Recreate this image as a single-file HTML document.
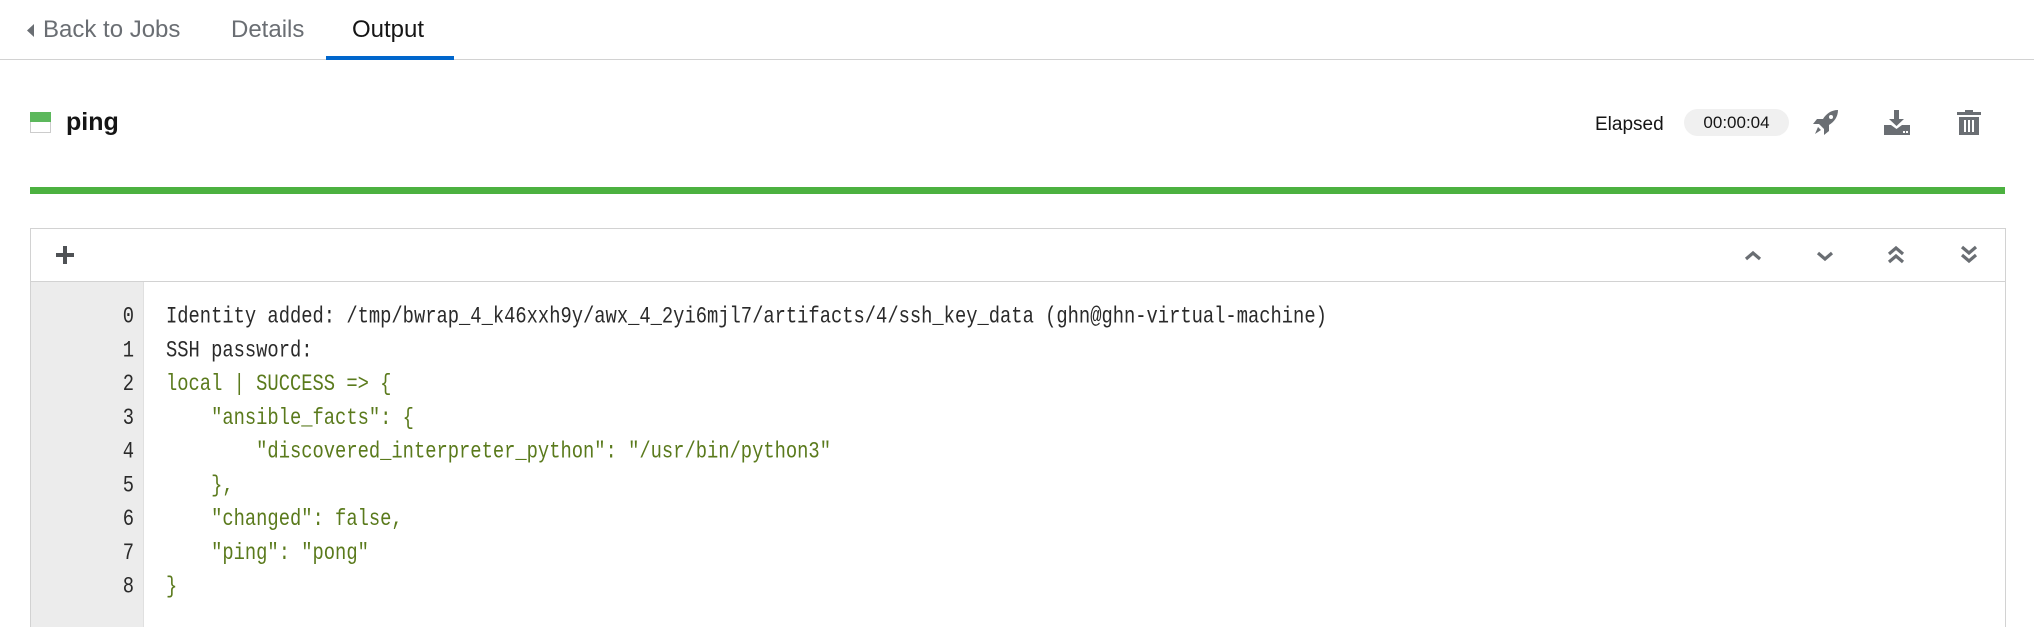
<!DOCTYPE html>
<html><head><meta charset="utf-8"><style>
*{margin:0;padding:0;box-sizing:border-box}
body{width:2034px;height:627px;background:#fff;position:relative;overflow:hidden;font-family:"Liberation Sans",sans-serif}
.a{position:absolute}
.tab{position:absolute;top:16px;font-size:24px;color:#6a6e73;line-height:28px}
.code{position:absolute;left:166px;font-family:"Liberation Mono",monospace;font-size:18.8px;line-height:27px;white-space:pre;color:#2a2a2a;transform:scaleY(1.25);transform-origin:0 0}
.num{position:absolute;left:30px;width:104px;text-align:right;font-family:"Liberation Mono",monospace;font-size:18.8px;line-height:27px;color:#2a2a2a;transform:scaleY(1.25);transform-origin:0 0}
.g{color:#5a7a1c}
</style></head><body>
<svg class="a" style="left:27px;top:24px" width="8" height="13"><path d="M7 0V13L0 6.5Z" fill="#6a6e73"/></svg>
<div class="tab" style="left:43px">Back to Jobs</div>
<div class="tab" style="left:231px">Details</div>
<div class="tab" style="left:352px;color:#151515">Output</div>
<div class="a" style="left:0;top:59px;width:2034px;height:1px;background:#d2d2d2"></div>
<div class="a" style="left:326px;top:56px;width:128px;height:4px;background:#06c"></div>

<div class="a" style="left:30px;top:112px;width:21px;height:10px;background:#5cb85c"></div>
<div class="a" style="left:30px;top:122px;width:21px;height:11px;border:1px solid #ccc;border-top:none"></div>
<div class="a" style="left:66px;top:108px;font-size:25px;font-weight:bold;color:#151515;line-height:28px">ping</div>

<div class="a" style="left:1595px;top:112px;font-size:19px;color:#151515;line-height:26px">Elapsed</div>
<div class="a" style="left:1684px;top:109px;width:105px;height:27px;border-radius:14px;background:#f0f0f0;font-size:17px;text-align:center;line-height:27px;color:#151515">00:00:04</div>
<svg class="a" style="left:1813px;top:110px" width="26" height="25" viewBox="0 0 26 25"><path d="M25 0C18 0 13 4 10 9L4 9 0 14 6 14 11 19 11 25 16 21 16 15C21 12 25 7 25 0Z" fill="#6a6e73"/><circle cx="18" cy="7" r="2" fill="#fff"/><path d="M5 17L8 20 2 24Z" fill="#6a6e73"/></svg>
<svg class="a" style="left:1884px;top:110px" width="26" height="25" viewBox="0 0 26 25"><path d="M10 0H15V9H20L12.5 16 5 9H10Z" fill="#6a6e73"/><path d="M0 15H7L12.5 19 18 15H26V25H0Z" fill="#6a6e73"/><rect x="19" y="21" width="2" height="2" fill="#fff"/><rect x="22" y="21" width="2" height="2" fill="#fff"/></svg>
<svg class="a" style="left:1957px;top:110px" width="24" height="25" viewBox="0 0 24 25"><path d="M8 0H16V2H24V5H0V2H8Z" fill="#6a6e73"/><path d="M2 7H22V25H2Z" fill="#6a6e73"/><rect x="7" y="10" width="2" height="12" fill="#fff"/><rect x="11" y="10" width="2" height="12" fill="#fff"/><rect x="15" y="10" width="2" height="12" fill="#fff"/></svg>

<div class="a" style="left:30px;top:187px;width:1975px;height:7px;background:#4cb140"></div>

<div class="a" style="left:30px;top:228px;width:1976px;height:399px;border:1px solid #d2d2d2;border-bottom:none"></div>
<div class="a" style="left:30px;top:281px;width:1976px;height:1px;background:#d2d2d2"></div>
<div class="a" style="left:31px;top:282px;width:112px;height:345px;background:#ececec"></div>
<div class="a" style="left:143px;top:282px;width:1px;height:345px;background:#e0e0e0"></div>
<svg class="a" style="left:55px;top:245px" width="20" height="20"><path d="M8 1H12V8H19V12H12V19H8V12H1V8H8Z" fill="#4f5255"/></svg>
<svg class="a" style="left:1744px;top:250px" width="100" height="16" fill="none" stroke="#6a6e73" stroke-width="3.2">
<path d="M2 9L9 3 16 9"/>
<path d="M74 3L81 9 88 3"/>
</svg>
<svg class="a" style="left:1960px;top:244px" width="20" height="20" fill="none" stroke="#6a6e73" stroke-width="3.2"><path d="M2 3L9 9 16 3M2 11L9 17 16 11"/></svg>
<svg class="a" style="left:1887px;top:245px" width="20" height="20" fill="none" stroke="#6a6e73" stroke-width="3.2"><path d="M2 9L9 3 16 9M2 17L9 11 16 17"/></svg>

<div class="num" style="top:300px">0<br>1<br>2<br>3<br>4<br>5<br>6<br>7<br>8</div>
<div class="code" style="top:300px">Identity added: /tmp/bwrap_4_k46xxh9y/awx_4_2yi6mjl7/artifacts/4/ssh_key_data (ghn@ghn-virtual-machine)
SSH password:
<span class="g">local | SUCCESS =&gt; {
    "ansible_facts": {
        "discovered_interpreter_python": "/usr/bin/python3"
    },
    "changed": false,
    "ping": "pong"
}</span></div>
</body></html>
